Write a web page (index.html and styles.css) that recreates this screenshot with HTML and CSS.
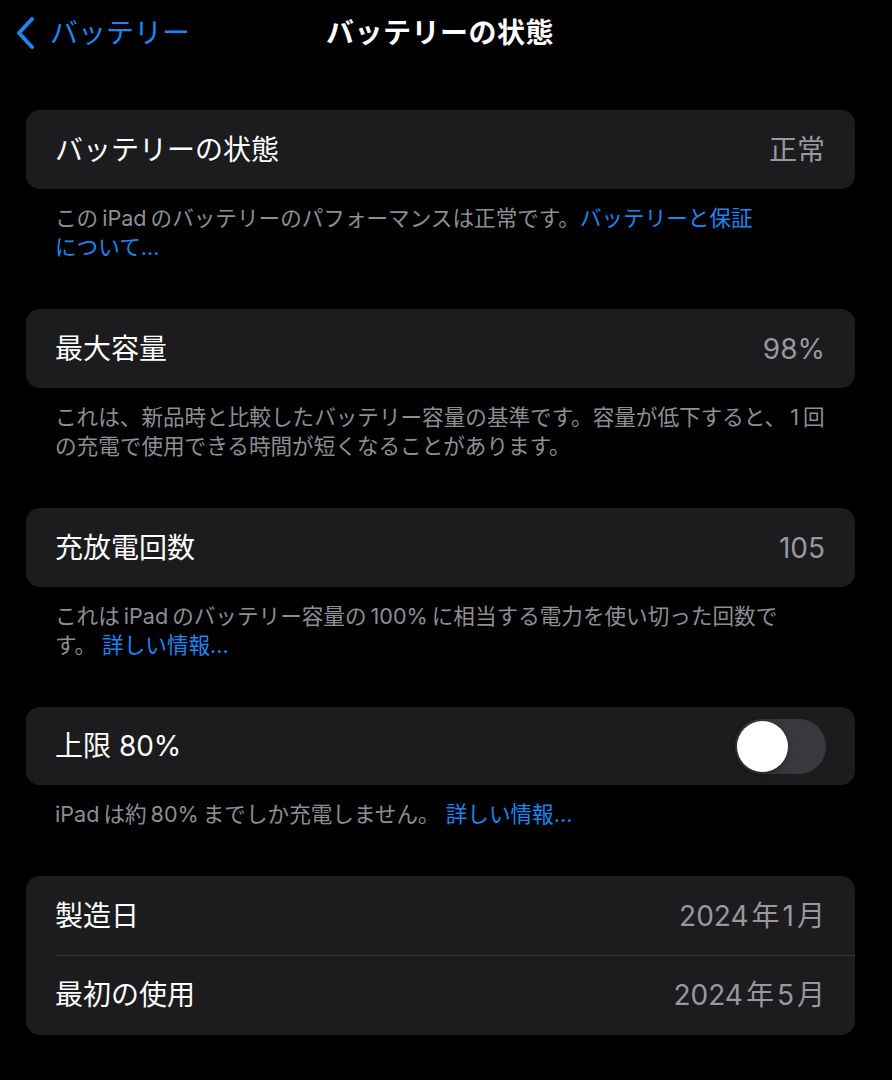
FILE: index.html
```html
<!DOCTYPE html>
<html lang="ja">
<head>
<meta charset="utf-8">
<title>バッテリーの状態</title>
<link rel="stylesheet" href="styles.css">
</head>
<body>
<header class="nav">
  <a class="back" href="#">
    <svg class="chev" width="22" height="34" viewBox="0 0 22 34"><path d="M18 3 L5 17 L18 31" fill="none" stroke="#1f86f0" stroke-width="4" stroke-linecap="round" stroke-linejoin="round"/></svg>
    <span>バッテリー</span>
  </a>
  <h1 class="title">バッテリーの状態</h1>
  <div class="spacer"></div>
</header>
<main class="content">
  <section class="group">
    <div class="card">
      <div class="row"><span class="label">バッテリーの状態</span><span class="value">正常</span></div>
    </div>
    <p class="note">この<span class="lat">iPad</span>のバッテリーのパフォーマンスは正常です。<a href="#">バッテリーと保証<br>について...</a></p>
  </section>
  <section class="group">
    <div class="card">
      <div class="row"><span class="label">最大容量</span><span class="value">98%</span></div>
    </div>
    <p class="note">これは、新品時と比較したバッテリー容量の基準です。容量が低下すると、<span class="lat">1</span>回<br>の充電で使用できる時間が短くなることがあります。</p>
  </section>
  <section class="group">
    <div class="card">
      <div class="row"><span class="label">充放電回数</span><span class="value">105</span></div>
    </div>
    <p class="note">これは<span class="lat">iPad</span>のバッテリー容量の<span class="lat">100%</span>に相当する電力を使い切った回数で<br>す。 <a href="#">詳しい情報...</a></p>
  </section>
  <section class="group">
    <div class="card">
      <div class="row row-toggle"><span class="label">上限 80%</span><span class="toggle"><span class="knob"></span></span></div>
    </div>
    <p class="note"><span class="lat lat-start">iPad</span>は約<span class="lat">80%</span>までしか充電しません。 <a href="#">詳しい情報...</a></p>
  </section>
  <section class="group">
    <div class="card">
      <div class="row"><span class="label">製造日</span><span class="value"><span class="num">2024</span>年<span class="num">1</span>月</span></div>
      <div class="row sep"><span class="label">最初の使用</span><span class="value"><span class="num">2024</span>年<span class="num">5</span>月</span></div>
    </div>
  </section>
</main>
</body>
</html>
```
FILE: styles.css
```css
html, body {
  margin: 0;
  padding: 0;
  background: #000;
}
body {
  width: 892px;
  height: 1080px;
  overflow: hidden;
  font-family: Inter, "Noto Sans CJK JP", "Noto Sans", sans-serif;
  color: #fff;
}
.nav {
  height: 66px;
  display: grid;
  grid-template-columns: 1fr auto 1fr;
  align-items: center;
  padding: 0 26px 0 14px;
}
.back {
  display: flex;
  align-items: center;
  gap: 14px;
  color: #1f86f0;
  text-decoration: none;
  font-size: 28px;
  line-height: 1;
}
.chev {
  display: block;
}
.title {
  margin: 0;
  font-size: 28px;
  font-weight: 700;
  line-height: 1;
  color: #fff;
  letter-spacing: 0.5px;
}
.content {
  padding: 44px 37px 0 26px;
}
.group {
  margin-bottom: 47px;
}
.card {
  background: #1c1c1e;
  border-radius: 14px;
  overflow: hidden;
}
.row {
  height: 79px;
  display: flex;
  align-items: center;
  justify-content: space-between;
  padding: 0 30px 0 29px;
  position: relative;
}
.row-toggle {
  height: 78px;
  padding-right: 29px;
}
.sep {
  height: 80px;
}
.sep::before {
  content: "";
  position: absolute;
  left: 29px;
  right: 0;
  top: 0;
  height: 1px;
  background: #38383a;
}
.label {
  font-size: 28px;
  line-height: 1;
  color: #fff;
}
.value {
  font-size: 28px;
  line-height: 1;
  color: #98989e;
}
.num {
  margin: 0 3px;
}
.num:first-child {
  margin-left: 0;
}
.toggle {
  width: 91px;
  height: 55px;
  border-radius: 28px;
  background: #39393d;
  position: relative;
  display: block;
}
.knob {
  position: absolute;
  left: 2px;
  top: 2px;
  width: 51px;
  height: 51px;
  border-radius: 50%;
  background: #fff;
  box-shadow: 0 2px 6px rgba(0,0,0,0.35);
}
.note {
  margin: 15px 0 0 0;
  padding: 0 0 0 29px;
  font-size: 21.6px;
  line-height: 29px;
  color: #8e8e93;
  white-space: nowrap;
}
.note a {
  color: #1f86f0;
  text-decoration: none;
}
.lat {
  margin: 0 4px;
}
.lat-start {
  margin-left: 0;
}
```
